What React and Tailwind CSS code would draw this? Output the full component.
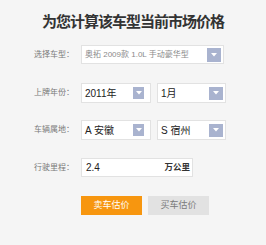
import React from "react";

const font = { fontFamily: '"Liberation Sans", "Noto Sans CJK SC", sans-serif' };

const Arrow = ({ size = "w-[14px] h-[14px]" }) => (
  <div className={`${size} bg-[#a9b3cf] flex items-center justify-center shrink-0`}>
    <svg width="6" height="4" viewBox="0 0 6 4">
      <path d="M0 0 L6 0 L3 3.5 Z" fill="#ffffff" />
    </svg>
  </div>
);

const Label = ({ children }) => (
  <div className="w-[81px] pr-[7px] text-right text-[8px] text-[#7a7a7a] shrink-0">{children}</div>
);

export default function App() {
  return (
    <div className="w-[266px] h-[245px] bg-[#f5f5f5] flex flex-col" style={font}>
      <div className="pt-[10px] text-center text-[15px] tracking-[-1px] leading-[24px] font-bold text-[#333]">
        为您计算该车型当前市场价格
      </div>

      <div className="flex items-center mt-[11px] h-[19px]">
        <Label>选择车型：</Label>
        <div className="w-[143px] h-[19px] bg-white border border-[#e2e2e2] flex items-center justify-between pl-[3px] pr-[2px]">
          <span className="text-[8px] text-[#8a8a8a]">奥拓 2009款 1.0L 手动豪华型</span>
          <Arrow />
        </div>
      </div>

      <div className="flex items-center mt-[19px] h-[20px]">
        <Label>上牌年份：</Label>
        <div className="flex gap-[6px]">
          <div className="w-[70px] h-[20px] bg-white border border-[#e2e2e2] flex items-center justify-between pl-[3px] pr-[6px]">
            <span className="text-[10px] text-[#222]">2011年</span>
            <Arrow size="w-[11px] h-[12px]" />
          </div>
          <div className="w-[69px] h-[20px] bg-white border border-[#e2e2e2] flex items-center justify-between pl-[3px] pr-[2px]">
            <span className="text-[10px] text-[#222]">1月</span>
            <Arrow size="w-[14px] h-[13px]" />
          </div>
        </div>
      </div>

      <div className="flex items-center mt-[17px] h-[20px]">
        <Label>车辆属地：</Label>
        <div className="flex gap-[6px]">
          <div className="w-[70px] h-[20px] bg-white border border-[#e2e2e2] flex items-center justify-between pl-[3px] pr-[6px]">
            <span className="text-[10px] text-[#222]">A 安徽</span>
            <Arrow size="w-[11px] h-[12px]" />
          </div>
          <div className="w-[69px] h-[20px] bg-white border border-[#e2e2e2] flex items-center justify-between pl-[3px] pr-[2px]">
            <span className="text-[10px] text-[#222]">S 宿州</span>
            <Arrow size="w-[14px] h-[13px]" />
          </div>
        </div>
      </div>

      <div className="flex items-center mt-[18px] h-[19px]">
        <Label>行驶里程：</Label>
        <div className="w-[112px] h-[19px] bg-white border border-[#e2e2e2] flex items-center justify-between pl-[4px] pr-[2px]">
          <span className="text-[10px] text-[#222]">2.4</span>
          <span className="text-[8.5px] font-bold text-[#333]">万公里</span>
        </div>
      </div>

      <div className="flex items-center mt-[19px] pl-[81px] gap-[6px]">
        <button className="w-[61px] h-[19px] bg-[#f7960f] text-white text-[9px]">卖车估价</button>
        <button className="w-[61px] h-[19px] bg-[#e2e2e2] text-[#7a7a7a] text-[9px]">买车估价</button>
      </div>
    </div>
  );
}
